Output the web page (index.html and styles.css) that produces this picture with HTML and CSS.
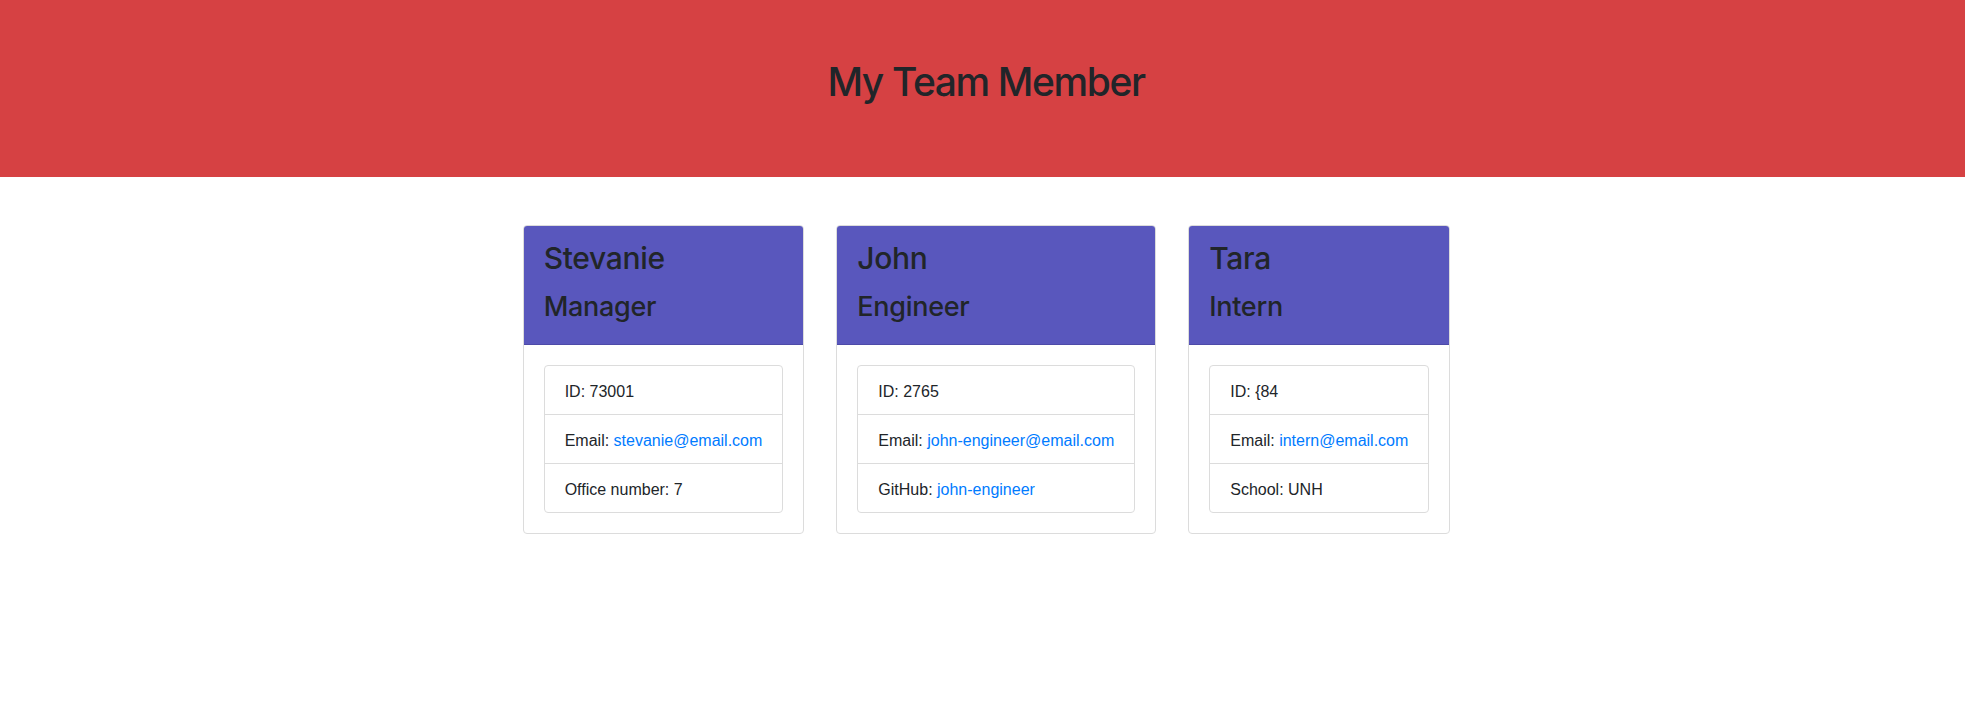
FILE: index.html
```html
<!DOCTYPE html>
<html lang="en">
<head>
<meta charset="utf-8">
<title>My Team</title>
<link rel="stylesheet" href="styles.css">
</head>
<body>
<header class="jumbo">
  <h1 class="title">My Team Member</h1>
</header>
<main class="team">
  <div class="card">
    <div class="card-header">
      <h2 class="name">Stevanie</h2>
      <h3 class="role">Manager</h3>
    </div>
    <div class="card-body">
      <ul class="list">
        <li class="item">ID: 73001</li>
        <li class="item">Email: <a class="link" href="#">stevanie@email.com</a></li>
        <li class="item">Office number: 7</li>
      </ul>
    </div>
  </div>
  <div class="card">
    <div class="card-header">
      <h2 class="name">John</h2>
      <h3 class="role">Engineer</h3>
    </div>
    <div class="card-body">
      <ul class="list">
        <li class="item">ID: 2765</li>
        <li class="item">Email: <a class="link" href="#">john-engineer@email.com</a></li>
        <li class="item">GitHub: <a class="link" href="#">john-engineer</a></li>
      </ul>
    </div>
  </div>
  <div class="card">
    <div class="card-header">
      <h2 class="name">Tara</h2>
      <h3 class="role">Intern</h3>
    </div>
    <div class="card-body">
      <ul class="list">
        <li class="item">ID: {84</li>
        <li class="item">Email: <a class="link" href="#">intern@email.com</a></li>
        <li class="item">School: UNH</li>
      </ul>
    </div>
  </div>
</main>
</body>
</html>
```
FILE: styles.css
```css
* { box-sizing: border-box; }
html, body { margin: 0; padding: 0; }
body {
  font-family: "Liberation Sans", Arial, sans-serif;
  font-size: 16px;
  line-height: 24px;
  color: #212529;
  background: #ffffff;
}
.jumbo {
  background: #d64143;
  padding: 58px 20px 71px;
  text-align: center;
}
.title {
  margin: 0;
  padding-left: 7px;
  font-family: Inter, "Liberation Sans", sans-serif;
  font-size: 39px;
  line-height: 48px;
  font-weight: 500;
  letter-spacing: -1.4px;
  color: #212529;
}
.team {
  display: flex;
  justify-content: center;
  align-items: flex-start;
  gap: 32px;
  padding: 48px 0 0 8px;
}
.card {
  border: 1px solid #dcdcdc;
  border-radius: 4px;
  background: #fff;
  overflow: hidden;
}
.card-header {
  background: #5957bd;
  padding: 13px 20px 13px;
  border-bottom: 1px solid #4d4aa8;
}
.name {
  margin: 0 0 13px;
  font-family: Inter, "Liberation Sans", sans-serif;
  font-size: 30px;
  line-height: 38px;
  font-weight: 500;
  letter-spacing: -0.3px;
  color: #212529;
}
.role {
  margin: 0 0 7px;
  font-family: Inter, "Liberation Sans", sans-serif;
  font-size: 27px;
  line-height: 34px;
  font-weight: 500;
  letter-spacing: -0.3px;
  color: #212529;
}
.card-body {
  padding: 20px;
}
.list {
  list-style: none;
  margin: 0;
  padding: 0;
  border: 1px solid #dcdcdc;
  border-radius: 4px;
}
.item {
  padding: 14px 20px 10px;
  border-bottom: 1px solid #dcdcdc;
  white-space: nowrap;
}
.item:last-child { border-bottom: 0; }
.link {
  color: #007bff;
  text-decoration: none;
}
```
